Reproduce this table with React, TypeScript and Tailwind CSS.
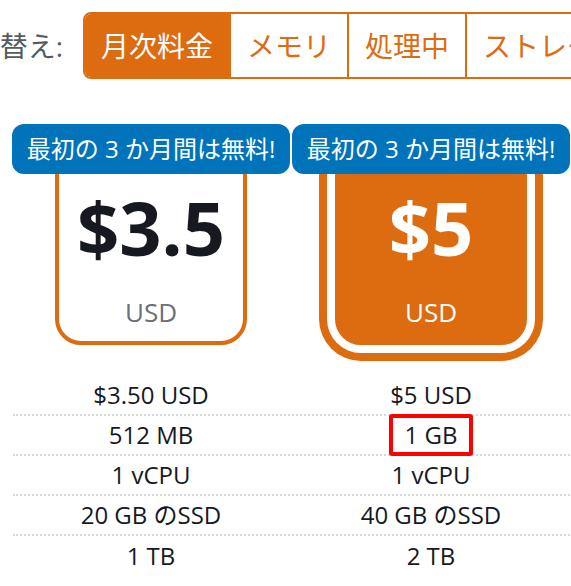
import React from 'react';

const ORANGE = 'border-[#dd6b10]';

const tabs = ['月次料金', 'メモリ', '処理中', 'ストレージ', '転送'];

const plans = [
  { price: '$3.5', featured: false },
  { price: '$5', featured: true },
];

const specs = [
  ['$3.50 USD', '$5 USD'],
  ['512 MB', '1 GB'],
  ['1 vCPU', '1 vCPU'],
  ['20 GB のSSD', '40 GB のSSD'],
  ['1 TB', '2 TB'],
];

export default function App() {
  return (
    <div
      className="relative w-[571px] h-[586px] overflow-hidden bg-white"
      style={{ fontFamily: '"Open Sans", "Noto Sans CJK JP", sans-serif' }}
    >
      {/* sort switcher */}
      <div className="flex items-center pt-[12px]">
        <div className="w-[63px] shrink-0 overflow-hidden flex justify-end whitespace-nowrap text-[28px] text-[#545b64]">
          切り替え:
        </div>
        <div className={`ml-[20px] flex shrink-0 border-2 ${ORANGE} rounded-l-[8px] overflow-hidden`}>
          {tabs.map((t, i) => (
            <div
              key={t}
              className={
                i === 0
                  ? 'h-[63px] px-4 flex items-center shrink-0 whitespace-nowrap text-[28px] bg-[#dd6b10] text-white'
                  : 'h-[63px] px-4 flex items-center shrink-0 whitespace-nowrap text-[28px] text-[#dd6b10] border-l-2 border-[#dd6b10]'
              }
            >
              {t}
            </div>
          ))}
        </div>
      </div>

      {/* plan cards */}
      <div className="flex ml-[11px] mt-[45px]">
        {plans.map((p) => (
          <div key={p.price} className="w-[280px] shrink-0 flex flex-col items-center">
            <div className="relative z-10 w-[278px] h-[50px] rounded-[12px] bg-[#0073bb] text-white text-[24px] flex items-center justify-center whitespace-nowrap">
              最初の 3 か月間は無料!
            </div>
            <div
              className={
                p.featured
                  ? 'w-[192px] h-[195px] -mt-[24px] rounded-[26px] border-4 border-[#dd6b10] bg-[#dd6b10] shadow-[0_0_0_8px_#fff,0_0_0_16px_#dd6b10] flex flex-col items-center pt-[37px]'
                  : 'w-[192px] h-[195px] -mt-[24px] rounded-[26px] border-4 border-[#dd6b10] bg-white flex flex-col items-center pt-[37px]'
              }
            >
              <div className={`text-[74px] leading-none font-bold ${p.featured ? 'text-white' : 'text-[#16191f]'}`}>
                {p.price}
              </div>
              <div className={`mt-[34px] text-[26px] leading-none ${p.featured ? 'text-white' : 'text-[#687078]'}`}>
                USD
              </div>
            </div>
          </div>
        ))}
      </div>

      {/* spec table */}
      <div className="ml-[13px] mt-[31px] w-[600px]">
        {specs.map((row, r) => (
          <div
            key={r}
            className={`flex h-[40px] ${r < specs.length - 1 ? 'border-b-2 border-dotted border-[#d5dbdb]' : ''}`}
          >
            {row.map((cell, c) => (
              <div
                key={c}
                className={`${c === 0 ? 'w-[276px]' : 'w-[284px]'} flex items-center justify-center text-[24px] text-[#16191f] whitespace-nowrap`}
              >
                <span className="relative">
                  {cell}
                  {r === 1 && c === 1 && (
                    <span className="absolute left-1/2 top-1/2 -translate-x-1/2 -translate-y-1/2 w-[84px] h-[42px] border-4 border-[#ff0000] rounded-[3px]" />
                  )}
                </span>
              </div>
            ))}
          </div>
        ))}
      </div>
    </div>
  );
}
